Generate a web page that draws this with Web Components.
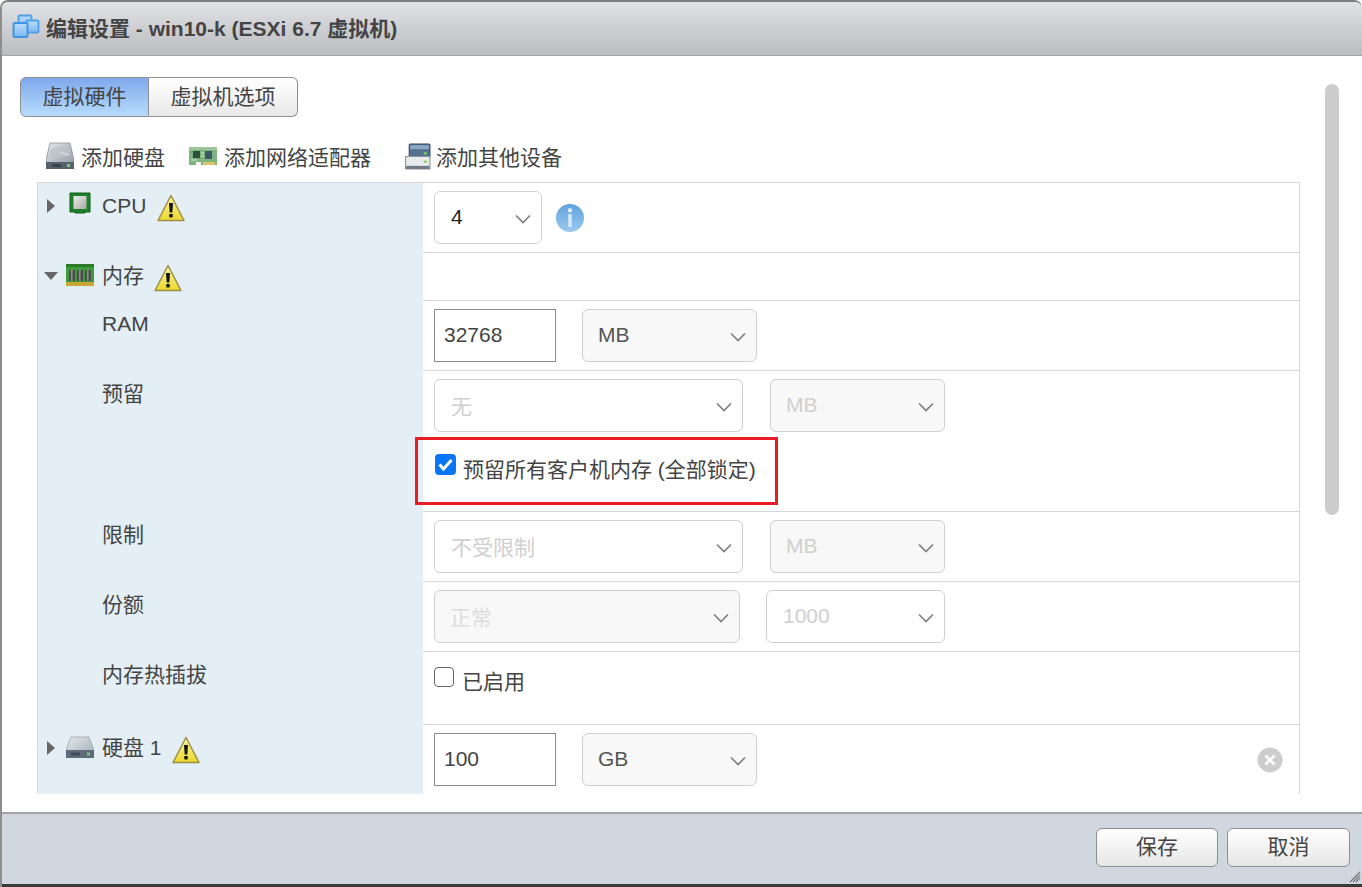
<!DOCTYPE html>
<html>
<head>
<meta charset="utf-8">
<title>编辑设置</title>
<style>
  html, body { margin: 0; height: 100%; background: #fff; overflow: hidden; }
  body { font-family: "Liberation Sans", "Noto Sans CJK SC", sans-serif; color: #444; font-size: 21px; }
</style>
</head>
<body>
<esxi-dialog>
  <esxi-icon slot="title-icon" name="vm" size="28"></esxi-icon>
  <span slot="title">编辑设置 - win10-k (ESXi 6.7 虚拟机)</span>

  <esxi-tabs></esxi-tabs>

  <esxi-toolbar></esxi-toolbar>

  <hw-table>
    <hw-row style="--h:70px" toggle="closed" icon="cpu" label="CPU" warn>
      <hw-select w="108" value="4"></hw-select>
      <esxi-icon name="info" size="30" style="margin:12px 0 0 13px"></esxi-icon>
    </hw-row>
    <hw-row style="--h:48px" toggle="open" icon="ram" label="内存" warn></hw-row>
    <hw-row style="--h:70px" sub label="RAM">
      <hw-input w="122" value="32768"></hw-input>
      <hw-select w="175" value="MB" gap="26" muted></hw-select>
    </hw-row>
    <hw-row style="--h:141px" sub label="预留">
      <hw-select w="309" value="无" faded></hw-select>
      <hw-select w="175" value="MB" gap="27" faded muted></hw-select>
      <hw-check slot="below" checked highlight>预留所有客户机内存 (全部锁定)</hw-check>
    </hw-row>
    <hw-row style="--h:70px" sub label="限制">
      <hw-select w="309" value="不受限制" faded></hw-select>
      <hw-select w="175" value="MB" gap="27" faded muted></hw-select>
    </hw-row>
    <hw-row style="--h:70px" sub label="份额">
      <hw-select w="306" value="正常" faded muted color="#dcdcdc"></hw-select>
      <hw-select w="179" value="1000" gap="26" faded></hw-select>
    </hw-row>
    <hw-row style="--h:73px" sub label="内存热插拔">
      <hw-check>已启用</hw-check>
    </hw-row>
    <hw-row style="--h:70px" toggle="closed" icon="disk" label="硬盘 1" warn removable>
      <hw-input w="122" value="100"></hw-input>
      <hw-select w="175" value="GB" gap="26" muted></hw-select>
    </hw-row>
  </hw-table>
</esxi-dialog>

<script>
const ICONS = {
  vm: `<svg viewBox="0 0 28 28"><defs><linearGradient id="v" x1="0" y1="0" x2="0" y2="1"><stop offset="0" stop-color="#b9dcfb"/><stop offset="1" stop-color="#7db9f1"/></linearGradient></defs>
    <rect x="6.500" y="2.500" width="13" height="12" rx="1" fill="url(#v)" stroke="#4f9fe8" stroke-width="1.800"/>
    <rect x="14.500" y="7.500" width="12" height="12" rx="1" fill="url(#v)" stroke="#4f9fe8" stroke-width="1.800"/>
    <rect x="1.500" y="10" width="14" height="14" rx="1" fill="url(#v)" stroke="#3f94e6" stroke-width="2"/></svg>`,
  cpu: `<svg viewBox="0 0 22 22"><defs><linearGradient id="c" x1="0" y1="0" x2="1" y2="1"><stop offset="0" stop-color="#ececec"/><stop offset="1" stop-color="#a8a8a8"/></linearGradient></defs>
    <path d="M1 1h20v19H16v1H6v-1H1z" fill="#1f7f2a" stroke="#0f5f18"/><rect x="4.500" y="4" width="13" height="13" fill="url(#c)"/></svg>`,
  ram: `<svg viewBox="0 0 28 22"><path d="M0 0h28v22H0z" fill="#3f9a3c"/><path d="M0 0h28v3H0z" fill="#2a7a2a"/><path d="M0 18h28v4H0z" fill="#c9a838"/>
    <g fill="#4a4f4a"><rect x="3" y="6" width="6" height="11"/><rect x="11" y="6" width="6" height="11"/><rect x="19" y="6" width="6" height="11"/></g>
    <g fill="#8b938b"><rect x="5" y="6" width="1.500" height="11"/><rect x="13" y="6" width="1.500" height="11"/><rect x="21" y="6" width="1.500" height="11"/></g></svg>`,
  warn: `<svg viewBox="0 0 28 28"><defs><linearGradient id="w" x1="0" y1="0" x2="0" y2="1"><stop offset="0" stop-color="#fbf6a0"/><stop offset="1" stop-color="#ecd82c"/></linearGradient></defs>
    <path d="M14 1.500 27 26.500H1z" fill="url(#w)" stroke="#9a9048" stroke-width="1.500" stroke-linejoin="round"/>
    <path d="M12 9h4l-.7 9.500h-2.600z" fill="#111"/><rect x="12.300" y="20" width="3.400" height="3.400" fill="#111"/></svg>`,
  info: `<svg viewBox="0 0 30 30"><defs><linearGradient id="i" x1="0" y1="0" x2="0" y2="1"><stop offset="0" stop-color="#5fa3dd"/><stop offset="1" stop-color="#9cc9ee"/></linearGradient></defs>
    <circle cx="15" cy="15" r="14" fill="url(#i)"/><rect x="13.200" y="5.500" width="3.600" height="3.600" fill="#eef6fd"/><rect x="13.200" y="11" width="3.600" height="13" fill="#d3e7f8"/></svg>`,
  close: `<svg viewBox="0 0 26 26"><circle cx="13" cy="13" r="12.500" fill="#cdcdcd"/><path d="M8.500 8.500l9 9M17.500 8.500l-9 9" stroke="#fff" stroke-width="2.600"/></svg>`,
  disk: `<svg viewBox="0 0 28 22"><defs><linearGradient id="d" x1="0" y1="0" x2="1" y2="1"><stop offset="0" stop-color="#e6e9ec"/><stop offset="1" stop-color="#a3abb3"/></linearGradient></defs>
    <path d="M5 1h18l5 13v7H0v-7z" fill="url(#d)" stroke="#9aa3ab" stroke-width=".8"/><rect x="0" y="14" width="28" height="8" fill="#5d6b7a"/><rect x="5" y="16.500" width="9" height="3" fill="#3f4b57"/><rect x="21" y="16.500" width="3" height="3" fill="#7fc66a"/></svg>`,
  diskbig: `<svg viewBox="0 0 28 28"><defs><linearGradient id="db" x1="0" y1="0" x2="1" y2="1"><stop offset="0" stop-color="#e8eaec"/><stop offset="1" stop-color="#8f979f"/></linearGradient></defs>
    <path d="M4 1h20l4 17v6H0v-6z" fill="url(#db)" stroke="#8a9299" stroke-width=".8"/><ellipse cx="14" cy="10" rx="10" ry="5.500" fill="#bcc3c9" opacity=".7"/><path d="M14 10l9 3" stroke="#dfe3e6" stroke-width="1.200"/>
    <rect x="0" y="20" width="28" height="7" fill="#56626e"/><rect x="6" y="22" width="9" height="3" fill="#36414b"/><rect x="21" y="22" width="3" height="3" fill="#7fc66a"/></svg>`,
  nic: `<svg viewBox="0 0 28 20"><rect y="1" width="28" height="18" fill="#7db37d"/><rect y="1" width="28" height="3" fill="#9cc59c"/>
    <rect x="4" y="5" width="7" height="7" fill="#2f4f3f"/><rect x="16" y="5" width="7" height="8" fill="#3a5a6a"/><path d="M12 7h3M12 10h3M2 14h6" stroke="#dcecdc"/>
    <path d="M7 16h5v3H7z" fill="#fff"/><path d="M14 16h12v3H14z" fill="#d8c66a"/></svg>`,
  dev: `<svg viewBox="0 0 26 26"><rect x="5" y="1" width="20" height="13" rx="1" fill="#53708e" stroke="#34495e"/><rect x="6" y="2" width="18" height="4" fill="#8aa6c2"/><rect x="19" y="9" width="3" height="2" fill="#7fd06a"/>
    <path d="M1.500 13H25v12H1.500z" fill="#e7e9ec" stroke="#8b9299"/><rect x="2" y="22" width="22.500" height="3" fill="#6e7a86"/><rect x="19" y="17" width="3" height="2" fill="#7fd06a"/></svg>`
};

class EsxiIcon extends HTMLElement {
  connectedCallback() {
    const size = this.getAttribute('size') || 24;
    if (!this.shadowRoot) this.attachShadow({ mode: 'open' });
    this.shadowRoot.innerHTML = `
      <style>
        :host { display: inline-block; flex: none; width: ${size}px; height: ${size}px; line-height: 0; }
        svg { width: 100%; height: 100%; display: block; }
      </style>
      ${ICONS[this.getAttribute('name')]}`;
  }
}

class EsxiDialog extends HTMLElement {
  constructor() {
    super();
    this.attachShadow({ mode: 'open' });
    this.shadowRoot.innerHTML = `
      <style>
        :host {
          display: flex;
          flex-direction: column;
          height: 887px;
          border-top: 2px solid #7b7b7b;
          box-sizing: border-box;
          border-left: 2px solid #8d8d8d;
          border-radius: 8px 8px 0 0;
          overflow: hidden;
          position: relative;
        }
        .head {
          flex: none;
          height: 54px;
          display: flex;
          align-items: center;
          gap: 6px;
          padding: 0 0 4px 10px;
          box-sizing: border-box;
          background: linear-gradient(#e1e2e6, #bbbcc0);
          border-bottom: 1px solid #a5a5a5;
          font-weight: bold;
          color: #444;
        }
        .body {
          flex: none;
          height: 756px;
          box-sizing: border-box;
          padding: 21px 0 0 18px;
          position: relative;
          overflow: hidden;
          background: #fff;
        }
        .scrollbar {
          position: absolute;
          left: 1323px;
          top: 28px;
          width: 14px;
          height: 431px;
          border-radius: 7px;
          background: #ccc;
        }
        .foot {
          flex: none;
          height: 72px;
          box-sizing: border-box;
          border-top: 2px solid #a3a3a3;
          background: #d0d7df;
          display: flex;
          justify-content: flex-end;
          gap: 9px;
          padding: 14px 12px 0 0;
          position: relative;
        }
        .foot button {
          height: 39px;
          width: 122px;
          font: inherit;
          color: #444;
          border: 1px solid #8f8f8f;
          border-radius: 6px;
          background: linear-gradient(#fff, #e6e6e6);
          padding: 0 0 6px;
        }
        .foot button + button { width: 123px; }
        .grip { position: absolute; right: 1px; bottom: 1px; }
        .edge { flex: none; height: 3px; background: #3a3a3a; margin-left: -2px; }
      </style>
      <div class="head"><slot name="title-icon"></slot><slot name="title"></slot></div>
      <div class="body"><slot></slot><div class="scrollbar"></div></div>
      <div class="foot">
        <button>保存</button><button>取消</button>
        <svg class="grip" width="12" height="12" viewBox="0 0 12 12"><path d="M11 1 1 11M11 4 4 11M11 7 7 11" stroke="#777" stroke-width="1.200"/></svg>
      </div>
      <div class="edge"></div>`;
  }
}

class EsxiTabs extends HTMLElement {
  constructor() {
    super();
    this.attachShadow({ mode: 'open' });
    this.shadowRoot.innerHTML = `
      <style>
        :host { display: flex; width: 278px; height: 40px; box-sizing: border-box; }
        div {
          display: flex; align-items: center; justify-content: center;
          box-sizing: border-box; height: 40px; padding-bottom: 5px;
          border: 1px solid #8f8f8f;
          color: #444;
        }
        .on { width: 129px; border-radius: 6px 0 0 6px; background: linear-gradient(#7fa9ec, #b8dcfd); }
        .off { width: 149px; border-left: 0; border-radius: 0 6px 6px 0; background: linear-gradient(#fff, #e8e8e8); }
      </style>
      <div class="on">虚拟硬件</div><div class="off">虚拟机选项</div>`;
  }
}

class EsxiToolbar extends HTMLElement {
  constructor() {
    super();
    this.attachShadow({ mode: 'open' });
    this.shadowRoot.innerHTML = `
      <style>
        :host { display: flex; align-items: center; height: 65px; box-sizing: border-box; padding: 13px 0 0 26px; color: #444; }
        span { display: flex; align-items: center; gap: 7px; }
      </style>
      <span><esxi-icon name="diskbig" size="28"></esxi-icon>添加硬盘</span>
      <span style="margin-left:24px"><esxi-icon name="nic" size="28"></esxi-icon>添加网络适配器</span>
      <span style="margin-left:33px;gap:5px"><esxi-icon name="dev" size="27"></esxi-icon>添加其他设备</span>`;
  }
}

class HwTable extends HTMLElement {
  constructor() {
    super();
    this.attachShadow({ mode: 'open' });
    this.shadowRoot.innerHTML = `
      <style>
        :host {
          display: block;
          width: 1263px;
          margin-left: 17px;
          box-sizing: border-box;
          border-left: 1px solid #d6d6d6;
          border-right: 1px solid #d6d6d6;
          border-top: 1px solid #d6d6d6;
          height: 612px;
          overflow: hidden;
        }
      </style>
      <slot></slot>`;
  }
}

class HwRow extends HTMLElement {
  constructor() {
    super();
    const toggle = this.getAttribute('toggle');
    const icon = this.getAttribute('icon');
    const sub = this.hasAttribute('sub');
    const warn = this.hasAttribute('warn');
    const removable = this.hasAttribute('removable');
    const warnGap = { cpu: 11, ram: 10, disk: 10 }[icon];
    this.attachShadow({ mode: 'open' });
    this.shadowRoot.innerHTML = `
      <style>
        :host {
          display: grid;
          grid-template-columns: 385px 1fr;
          height: var(--h);
          box-sizing: border-box;
          border-bottom: 1px solid #d6d6d6;
        }
        .name {
          background: #e3eef5;
          display: flex;
          align-items: flex-start;
          height: calc(var(--h) + 1px);
          box-sizing: border-box;
          padding: 9px 0 0 ${sub ? 64 : 2}px;
          color: #444;
        }
        .tog { width: 22px; flex: none; display: flex; justify-content: center; padding-top: 6px; }
        .ic { width: 32px; margin: 0 0 0 4px; padding-right: 4px; flex: none; box-sizing: content-box; }
        .label { line-height: 28px; }
        .cell { position: relative; padding: 8px 0 0 11px; min-width: 0; }
        .ctl { display: flex; align-items: flex-start; }
        .rm { position: absolute; right: 16px; top: 22px; }
      </style>
      <div class="name">
        ${toggle ? `<div class="tog">${toggle === 'open'
          ? '<svg width="14" height="9" viewBox="0 0 14 9" style="margin-top:4px"><path d="M0 0h14L7 8z" fill="#666"/></svg>'
          : '<svg width="9" height="14" viewBox="0 0 9 14" style="margin-top:1px"><path d="M0 0l8 7-8 7z" fill="#666"/></svg>'}</div>` : ''}
        ${icon ? `<div class="ic"><esxi-icon name="${icon}" size="${icon === 'cpu' ? 22 : 28}" style="margin-left:${icon === 'cpu' ? 3 : 0}px;margin-top:${icon === 'cpu' ? 0 : -1}px"></esxi-icon></div>` : ''}
        <span class="label">${this.getAttribute('label')}</span>
        ${warn ? `<esxi-icon name="warn" size="28" style="margin:1.500px 0 0 ${warnGap}px"></esxi-icon>` : ''}
      </div>
      <div class="cell">
        <div class="ctl"><slot></slot></div>
        <slot name="below"></slot>
        ${removable ? '<esxi-icon class="rm" name="close" size="26"></esxi-icon>' : ''}
      </div>`;
  }
}

class HwSelect extends HTMLElement {
  constructor() {
    super();
    const faded = this.hasAttribute('faded');
    const muted = this.hasAttribute('muted');
    const color = this.getAttribute('color') || (faded ? '#cfcfcf' : (muted ? '#555' : '#222'));
    this.attachShadow({ mode: 'open' });
    this.shadowRoot.innerHTML = `
      <style>
        :host {
          display: flex;
          flex: none;
          align-items: center;
          justify-content: space-between;
          box-sizing: border-box;
          width: ${this.getAttribute('w')}px;
          height: 52.800px;
          margin-left: ${this.getAttribute('gap') || 0}px;
          padding: 0 10px 0 ${muted ? 15 : 16}px;
          border: 1px solid #cfcfcf;
          border-radius: 6px;
          background: ${muted ? '#f8f8f8' : '#fff'};
          color: ${color};
        }
        svg { margin-top: 3px; }
      </style>
      <span>${this.getAttribute('value')}</span>
      <svg width="16" height="10" viewBox="0 0 16 10"><path d="M1 1.500 8 8.500 15 1.500" fill="none" stroke="#808080" stroke-width="1.700"/></svg>`;
  }
}

class HwInput extends HTMLElement {
  constructor() {
    super();
    this.attachShadow({ mode: 'open' });
    this.shadowRoot.innerHTML = `
      <style>
        :host {
          display: flex;
          flex: none;
          align-items: center;
          box-sizing: border-box;
          width: ${this.getAttribute('w')}px;
          height: 52.800px;
          padding-left: 9px;
          border: 1px solid #8c8c8c;
          color: #444;
        }
      </style>
      ${this.getAttribute('value')}`;
  }
}

class HwCheck extends HTMLElement {
  constructor() {
    super();
    const checked = this.hasAttribute('checked');
    const highlight = this.hasAttribute('highlight');
    this.attachShadow({ mode: 'open' });
    this.shadowRoot.innerHTML = `
      <style>
        :host { display: flex; align-items: flex-start; position: relative; color: #444; margin-top: ${highlight ? 23 : 7}px; line-height: 30px; }
        .box {
          flex: none; box-sizing: border-box; border-radius: 4px;
          width: ${checked ? 21 : 20}px; height: ${checked ? 21 : 20}px;
          margin: ${checked ? '-1px 7px 0 1px' : '0 8px 0 0'};
          border: ${checked ? '0' : '1.500px solid #666'};
          background: ${checked ? '#0a76f6' : '#fff'};
        }
        .mark { display: block; width: 21px; height: 21px; }
        .red {
          position: absolute;
          left: -19px;
          top: -18px;
          width: 363px;
          height: 68px;
          box-sizing: border-box;
          border: 3px solid #e71c24;
        }
      </style>
      <div class="box">${checked ? '<svg class="mark" viewBox="0 0 21 21"><path d="M4.500 10.500l4 4.500 8-9" fill="none" stroke="#fff" stroke-width="3"/></svg>' : ''}</div>
      <span><slot></slot></span>
      ${highlight ? '<div class="red"></div>' : ''}`;
  }
}

customElements.define('esxi-icon', EsxiIcon);
customElements.define('esxi-dialog', EsxiDialog);
customElements.define('esxi-tabs', EsxiTabs);
customElements.define('esxi-toolbar', EsxiToolbar);
customElements.define('hw-table', HwTable);
customElements.define('hw-row', HwRow);
customElements.define('hw-select', HwSelect);
customElements.define('hw-input', HwInput);
customElements.define('hw-check', HwCheck);
</script>
</body>
</html>
